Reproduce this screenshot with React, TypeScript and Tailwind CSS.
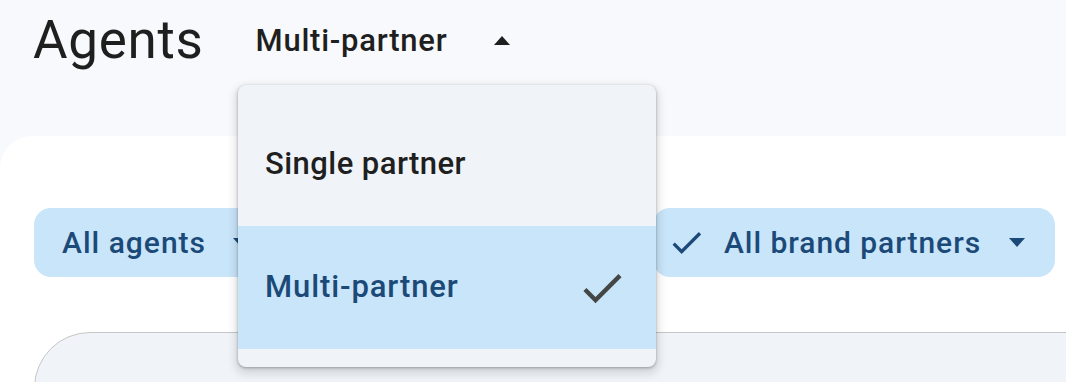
import React from "react";

function CheckIcon({ className }: { className?: string }) {
  return (
    <svg viewBox="0 0 24 24" className={className} fill="currentColor">
      <path d="M9 16.17 4.83 12l-1.42 1.41L9 19 21 7l-1.41-1.41z" />
    </svg>
  );
}

function ArrowDown({ className }: { className?: string }) {
  return (
    <svg viewBox="0 0 16 9" className={className} fill="currentColor">
      <path d="M0 0h16L8 9z" />
    </svg>
  );
}

export default function App() {
  return (
    <div
      className="relative h-[382px] w-full overflow-hidden bg-[#f8f9fc]"
      style={{ fontFamily: "Roboto, 'Noto Sans', sans-serif" }}
    >
      {/* Header */}
      <div className="flex h-[136px] items-start pl-[33px] pt-[14px]">
        <div className="flex h-[53px] items-center">
          <h1 className="text-[53px] leading-none font-normal tracking-[0.7px] text-[#1f1f1f]">Agents</h1>
          <button className="ml-[52px] flex items-center text-[31px] leading-none font-medium tracking-[0.75px] text-[#1f1f1f]">
            Multi-partner
            <svg viewBox="0 0 16 9" className="ml-[47px] h-[9px] w-[16px] text-[#1f1f1f]" fill="currentColor">
              <path d="M8 0l8 9H0z" />
            </svg>
          </button>
        </div>
      </div>

      {/* Main panel */}
      <div className="rounded-tl-[32px] bg-white pt-[72px] pl-[34px]">
        <div className="flex items-center gap-[16px]">
          <div className="flex h-[69px] w-[235px] items-center rounded-[17px] bg-[#c9e5fa] pl-[28px] pr-[20px] text-[30px] font-medium tracking-[1px] text-[#1c4a78]">
            <span className="flex-1">All agents</span>
            <ArrowDown className="h-[9px] w-[16px]" />
          </div>
          <div className="flex h-[69px] w-[352px] items-center rounded-[17px] bg-[#c9e5fa] pl-[28px] text-[30px] font-medium text-[#1c4a78]">
            Multi-partner
          </div>
          <div className="flex h-[69px] w-[402px] items-center rounded-[17px] bg-[#c9e5fa] pl-[14px] pr-[30px] text-[30px] font-medium tracking-[0.95px] text-[#1c4a78]">
            <CheckIcon className="h-[39px] w-[39px]" />
            <span className="ml-[18px] flex-1">All brand partners</span>
            <ArrowDown className="h-[9px] w-[16px]" />
          </div>
        </div>

        <div className="mt-[55px] h-[200px] w-[1100px] rounded-t-[56px] border border-[#c4c7c5] bg-[#f0f4f9]" />
      </div>

      {/* Dropdown menu */}
      <div className="absolute left-[238px] top-[85px] w-[418px] rounded-[8px] bg-[#f0f4f9] py-[18px] shadow-[0_4px_8px_3px_rgba(0,0,0,0.12),0_1px_3px_rgba(0,0,0,0.3)]">
        <div className="flex h-[123px] items-center px-[27px] text-[31px] font-medium tracking-[0.45px] text-[#1f1f1f]">
          Single partner
        </div>
        <div className="flex h-[123px] items-center justify-between bg-[#c9e5fa] pl-[27px] pr-[28px] text-[31px] font-medium tracking-[0.9px] text-[#1c4a78]">
          <span>Multi-partner</span>
          <CheckIcon className="h-[52px] w-[52px] text-[#444746]" />
        </div>
      </div>
    </div>
  );
}
